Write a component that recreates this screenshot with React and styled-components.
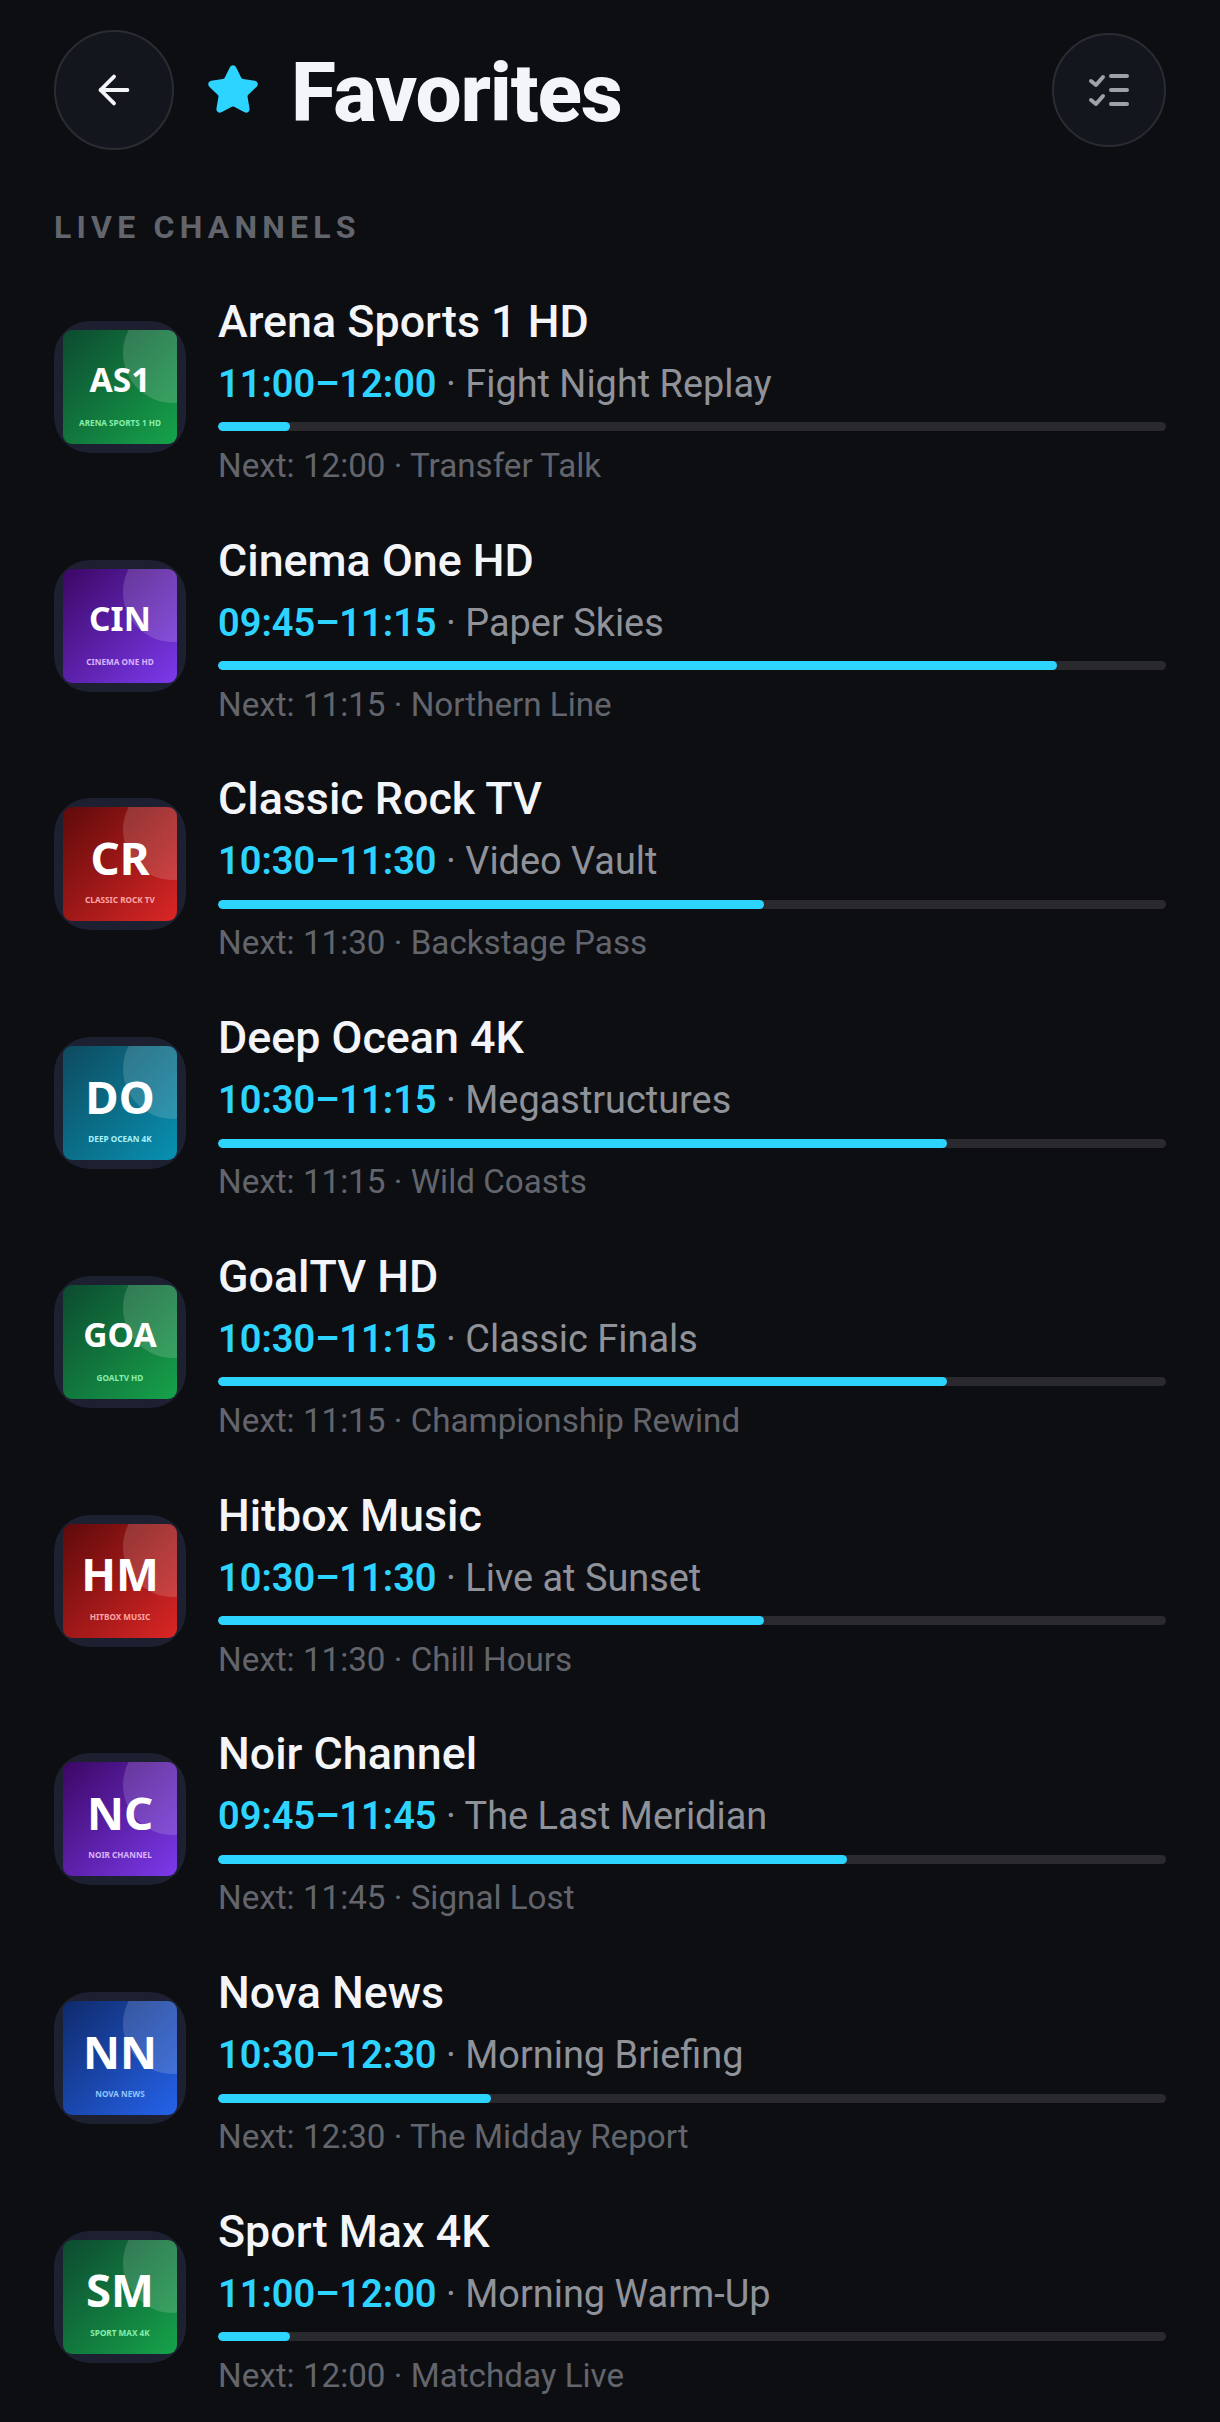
import React from "react";
import styled, { createGlobalStyle } from "styled-components";
import { ArrowLeft, Star } from "lucide-react";

const GlobalStyle = createGlobalStyle`
	html, body {
		margin: 0;
		padding: 0;
		background: #0d0e12;
	}
	* {
		box-sizing: border-box;
	}
`;

const Screen = styled.div`
	width: 1220px;
	height: 2422px;
	overflow: hidden;
	background: #0d0e12;
	padding: 30px 54px 0;
	font-family: Roboto, sans-serif;
`;

const Header = styled.header`
	display: flex;
	align-items: center;
	height: 120px;
`;

const RoundButton = styled.button`
	display: flex;
	align-items: center;
	justify-content: center;
	width: ${(p) => p.$size}px;
	height: ${(p) => p.$size}px;
	padding: 0;
	border-radius: 50%;
	border: 2px solid #2a2c33;
	background: #14161e;
	color: ${(p) => p.$color};
`;

const StarIcon = styled(Star)`
	margin-left: 32px;
	color: #2dd4ff;
	fill: #2dd4ff;
`;

const Title = styled.h1`
	flex: 1;
	margin: 0 0 0 31px;
	padding-top: 6px;
	color: #f4f5f9;
	font-size: 82px;
	font-weight: 800;
	letter-spacing: -1.2px;
	line-height: 1;
`;

const SectionLabel = styled.h2`
	margin: 59px 0 0;
	color: #63656d;
	font-size: 32px;
	font-weight: 700;
	letter-spacing: 5.2px;
	line-height: 36px;
`;

const List = styled.div`
	display: flex;
	flex-direction: column;
	margin-top: 22.5px;
`;

const Row = styled.div`
	display: flex;
	align-items: center;
	height: 238.75px;
	gap: 32px;
`;

const LogoFrame = styled.div`
	flex: none;
	width: 132px;
	height: 132px;
	padding: 9px;
	border-radius: 36px;
	background: #1c2030;
`;

const Logo = styled.div`
	position: relative;
	overflow: hidden;
	display: flex;
	flex-direction: column;
	align-items: center;
	height: 100%;
	border-radius: 9px;
	font-family: "Noto Sans", sans-serif;
	background: linear-gradient(135deg, ${(p) => p.$from}, ${(p) => p.$to});

	&::after {
		content: "";
		position: absolute;
		top: -27px;
		right: -46px;
		width: 100px;
		height: 100px;
		border-radius: 50%;
		background: rgba(255, 255, 255, 0.15);
	}
`;

const LogoCode = styled.span`
	margin-top: 27.5px;
	color: #fff;
	font-size: ${(p) => p.$size}px;
	font-weight: 700;
	line-height: 44px;
`;

const LogoName = styled.span`
	margin-top: 16.5px;
	color: ${(p) => p.$color};
	font-size: 8.2px;
	font-weight: 700;
	line-height: 10px;
	white-space: nowrap;
`;

const Info = styled.div`
	flex: 1;
	min-width: 0;
	padding-top: 9px;
`;

const Name = styled.div`
	color: #f4f5f9;
	font-size: 44.8px;
	font-weight: 500;
	line-height: 50px;
`;

const Now = styled.div`
	margin-top: 14px;
	color: #90929a;
	font-size: 37.9px;
	line-height: 46px;

	b {
		color: #2dd4ff;
		font-size: 38px;
		font-weight: 600;
	}
`;

const Track = styled.div`
	height: 9px;
	margin-top: 15.5px;
	border-radius: 5px;
	background: #29292e;
	overflow: hidden;
`;

const Fill = styled.div`
	height: 100%;
	border-radius: 5px;
	background: #2dd4ff;
`;

const Next = styled.div`
	margin-top: 14.5px;
	color: #63656d;
	font-size: 33.2px;
	line-height: 40px;
`;

const palettes = {
	green: { from: "#0d4a30", to: "#16a34a", text: "#86efac" },
	purple: { from: "#3b0764", to: "#7c3aed", text: "#d8b4fe" },
	red: { from: "#5f0a0a", to: "#dc2626", text: "#fca5a5" },
	teal: { from: "#0e4a5e", to: "#0891b2", text: "#a5f3fc" },
	blue: { from: "#0f2a6b", to: "#2563eb", text: "#93c5fd" },
};

const channels = [
	{ code: "AS1", name: "Arena Sports 1 HD", tone: "green", time: "11:00–12:00", show: "Fight Night Replay", next: "12:00 · Transfer Talk", pct: 7.6 },
	{ code: "CIN", name: "Cinema One HD", tone: "purple", time: "09:45–11:15", show: "Paper Skies", next: "11:15 · Northern Line", pct: 88.5 },
	{ code: "CR", name: "Classic Rock TV", tone: "red", time: "10:30–11:30", show: "Video Vault", next: "11:30 · Backstage Pass", pct: 57.6 },
	{ code: "DO", name: "Deep Ocean 4K", tone: "teal", time: "10:30–11:15", show: "Megastructures", next: "11:15 · Wild Coasts", pct: 76.9 },
	{ code: "GOA", name: "GoalTV HD", tone: "green", time: "10:30–11:15", show: "Classic Finals", next: "11:15 · Championship Rewind", pct: 76.9 },
	{ code: "HM", name: "Hitbox Music", tone: "red", time: "10:30–11:30", show: "Live at Sunset", next: "11:30 · Chill Hours", pct: 57.6 },
	{ code: "NC", name: "Noir Channel", tone: "purple", time: "09:45–11:45", show: "The Last Meridian", next: "11:45 · Signal Lost", pct: 66.3 },
	{ code: "NN", name: "Nova News", tone: "blue", time: "10:30–12:30", show: "Morning Briefing", next: "12:30 · The Midday Report", pct: 28.8 },
	{ code: "SM", name: "Sport Max 4K", tone: "green", time: "11:00–12:00", show: "Morning Warm-Up", next: "12:00 · Matchday Live", pct: 7.6 },
];

const ChecklistIcon = () => (
	<svg width='48' height='48' viewBox='0 0 48 48' fill='none' stroke='currentColor' strokeWidth='4' strokeLinecap='round' strokeLinejoin='round'>
		<path d='M6 15l5 4 7-8' />
		<path d='M6 34l5 4 7-8' />
		<path d='M26 10h16' />
		<path d='M26 24h16' />
		<path d='M26 38h16' />
	</svg>
);

const App = () => (
	<Screen>
		<GlobalStyle />
		<Header>
			<RoundButton $size={120} $color='#f4f5f9'>
				<ArrowLeft size={46} strokeWidth={2} />
			</RoundButton>
			<StarIcon size={54} strokeWidth={2} />
			<Title>Favorites</Title>
			<RoundButton $size={114} $color='#9fa1a9'>
				<ChecklistIcon />
			</RoundButton>
		</Header>
		<SectionLabel>LIVE CHANNELS</SectionLabel>
		<List>
			{channels.map((c) => (
				<Row key={c.code}>
					<LogoFrame>
						<Logo $from={palettes[c.tone].from} $to={palettes[c.tone].to}>
							<LogoCode $size={c.code.length > 2 ? 33.5 : 45.5}>{c.code}</LogoCode>
							<LogoName $color={palettes[c.tone].text}>{c.name.toUpperCase()}</LogoName>
						</Logo>
					</LogoFrame>
					<Info>
						<Name>{c.name}</Name>
						<Now>
							<b>{c.time}</b> · {c.show}
						</Now>
						<Track>
							<Fill style={{ width: `${c.pct}%` }} />
						</Track>
						<Next>Next: {c.next}</Next>
					</Info>
				</Row>
			))}
		</List>
	</Screen>
);

export default App;
